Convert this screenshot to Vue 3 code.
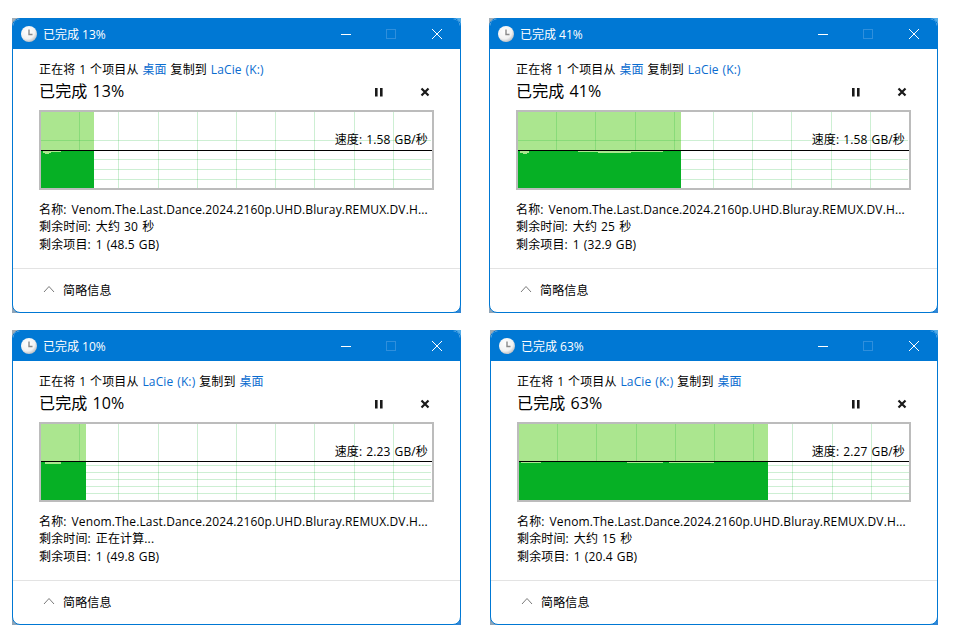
<script setup>
const verticals = [38, 77, 117, 156, 195, 234, 273, 313, 352]
const linesA = [28, 47, 57, 67]
const linesB = [41, 48, 55, 62, 69]
const windows = [
  { pct: 13, from: '桌面', to: 'LaCie (K:)', speed: '1.58', time: '大约 30 秒', left: '1 (48.5 GB)', fill: 53, line: 38, grid: linesA, notches: [[2, 8, 2], [4, 4, 3], [10, 10, 1]] },
  { pct: 41, from: '桌面', to: 'LaCie (K:)', speed: '1.58', time: '大约 25 秒', left: '1 (32.9 GB)', fill: 163, line: 38, grid: linesA, notches: [[2, 9, 2], [5, 4, 3], [60, 20, 1], [80, 33, 2], [113, 32, 1]] },
  { pct: 10, from: 'LaCie (K:)', to: '桌面', speed: '2.23', time: '正在计算...', left: '1 (49.8 GB)', fill: 45, line: 37, grid: linesB, notches: [[4, 16, 2]] },
  { pct: 63, from: 'LaCie (K:)', to: '桌面', speed: '2.27', time: '大约 15 秒', left: '1 (20.4 GB)', fill: 249, line: 37, grid: linesB, shift: true, notches: [[2, 20, 1], [108, 36, 1], [150, 45, 1]] }
]
</script>

<template>
  <main class="desk">
    <section v-for="w in windows" :key="w.pct" class="win" :class="{ shifted: w.shift }">
      <div class="shell">
        <header class="title">
          <svg class="clock" width="18" height="18" viewBox="0 0 18 18">
            <defs>
              <radialGradient :id="'c' + w.pct" cx="40%" cy="35%" r="70%">
                <stop offset="0" stop-color="#ffffff" />
                <stop offset="0.65" stop-color="#f2f2f2" />
                <stop offset="1" stop-color="#b4b8bd" />
              </radialGradient>
            </defs>
            <circle cx="9" cy="9" r="8" :fill="'url(#c' + w.pct + ')'" />
            <path d="M9 4.5V9.5H12.5" fill="none" stroke="#8a8a8a" stroke-width="1.4" />
          </svg>
          <span class="title-text">已完成 {{ w.pct }}%</span>
          <div class="controls">
            <span class="ctl">
              <svg width="12" height="12" viewBox="0 0 12 12"><path d="M1 6.5H11" stroke="#fff" stroke-width="1" /></svg>
            </span>
            <span class="ctl">
              <svg class="max" width="12" height="12" viewBox="0 0 12 12"><rect x="1.5" y="1.5" width="9" height="9" fill="none" stroke="#2f8fdc" stroke-width="1" /></svg>
            </span>
            <span class="ctl">
              <svg width="12" height="12" viewBox="0 0 12 12"><path d="M1 1L11 11M11 1L1 11" stroke="#fff" stroke-width="1" /></svg>
            </span>
          </div>
        </header>

        <div class="body">
          <p class="op">正在将 1 个项目从 <a>{{ w.from }}</a> 复制到 <a>{{ w.to }}</a></p>
          <div class="head">
            <h1>已完成 {{ w.pct }}%</h1>
            <div class="actions">
              <svg width="10" height="10" viewBox="0 0 10 10"><path d="M1 1H3.6V9.5H1ZM6 1H8.6V9.5H6Z" fill="#1a1a1a" /></svg>
              <svg width="10" height="10" viewBox="0 0 10 10"><path d="M1.5 1.5L8.5 8.5M8.5 1.5L1.5 8.5" stroke="#1a1a1a" stroke-width="2.2" /></svg>
            </div>
          </div>

          <div class="chart">
            <svg class="plot">
              <rect x="0" y="0" :width="w.fill" height="76" fill="#abe68f" />
              <rect v-for="v in verticals" :key="v" :x="v" y="0" width="1" height="76" fill="#06b025" fill-opacity="0.2" />
              <rect v-for="g in w.grid" :key="g" x="0" :y="g" width="390" height="1" fill="#06b025" fill-opacity="0.2" />
              <rect x="0" :y="w.line" :width="w.fill" height="40" fill="#06b025" />
              <rect v-for="n in w.notches" :key="n[0]" :x="n[0]" :y="w.line + 1" :width="n[1]" :height="n[2]" fill="#abe68f" />
              <rect x="0" :y="w.line" width="392" height="1" fill="#000" />
            </svg>
            <span class="speed">速度: {{ w.speed }} GB/秒</span>
          </div>

          <dl class="info">
            <div><dt>名称:</dt><dd>Venom.The.Last.Dance.2024.2160p.UHD.Bluray.REMUX.DV.H...</dd></div>
            <div><dt>剩余时间:</dt><dd>{{ w.time }}</dd></div>
            <div><dt>剩余项目:</dt><dd>{{ w.left }}</dd></div>
          </dl>
        </div>

        <footer class="foot">
          <svg width="12" height="8" viewBox="0 0 12 8"><path d="M1 7L6 1.5L11 7" fill="none" stroke="#7a7a7a" stroke-width="1" /></svg>
          <span>简略信息</span>
        </footer>
      </div>
    </section>
  </main>
</template>

<style>
html, body { background: #fff; }
</style>

<style scoped>
.desk {
  width: 955px;
  height: 643px;
  box-sizing: border-box;
  padding: 18px 0 0 12px;
  display: grid;
  grid-template-columns: 449px 449px;
  grid-template-rows: 295px 295px;
  column-gap: 28px;
  row-gap: 17px;
  background: #fff;
  font-family: "Open Sans", "Noto Sans CJK SC", sans-serif;
  font-size: 12px;
  letter-spacing: 0.13px;
  word-spacing: 0.8px;
  color: #000;
}
.win {
  background:
    linear-gradient(#a3adb5, #a3adb5) left top / 8px 8px no-repeat,
    linear-gradient(#55ade8, #55ade8) right top / 8px 8px no-repeat,
    linear-gradient(#8fa5b8, #8fa5b8) left bottom / 8px 8px no-repeat,
    linear-gradient(#2f86d6, #2f86d6) right bottom / 8px 8px no-repeat;
}
.win.shifted { margin-left: 1px; }
.shell {
  height: 100%;
  box-sizing: border-box;
  border: 1px solid #0078d4;
  border-radius: 8px;
  overflow: hidden;
  background: #fff;
  display: flex;
  flex-direction: column;
}
.title {
  height: 30px;
  flex: none;
  margin-top: -1px;
  padding-top: 1px;
  background: #0078d4;
  color: #fff;
  display: flex;
  align-items: center;
  padding-left: 7px;
  letter-spacing: 0;
  word-spacing: 0;
}
.clock { flex: none; margin-right: 5px; }
.title-text { flex: 1; }
.controls { display: flex; }
.ctl {
  width: 45.5px;
  height: 30px;
  display: flex;
  align-items: center;
  justify-content: center;
}
.max { margin-right: 1px; }
.body {
  flex: 1;
  padding: 11px 26px 0 26px;
}
.op {
  margin: 0;
  line-height: 20px;
  white-space: nowrap;
  word-spacing: 0.6px;
}
.op a { color: #0a6ccf; }
.head {
  display: flex;
  justify-content: space-between;
  align-items: center;
  height: 22px;
  margin-bottom: 8px;
}
.head h1 {
  margin: 0;
  font-size: 16px;
  font-weight: 400;
  line-height: 22px;
}
.actions {
  display: flex;
  gap: 36px;
  padding-right: 4px;
  margin-top: 2px;
}
.chart {
  position: relative;
  height: 80px;
  box-sizing: border-box;
  border: 2px solid #bcbcbc;
}
.plot {
  display: block;
  width: 100%;
  height: 100%;
}
.speed {
  position: absolute;
  right: 4px;
  top: 19px;
  line-height: 18px;
  white-space: nowrap;
}
.info {
  margin: 10.5px 0 0;
  line-height: 17.5px;
}
.info div { display: flex; gap: 5px; white-space: nowrap; }
.info dt, .info dd { margin: 0; }
.foot {
  flex: none;
  height: 42px;
  padding-bottom: 1px;
  border-top: 1px solid #e3e3e3;
  display: flex;
  align-items: center;
  gap: 8px;
  padding-left: 30px;
}
.foot svg { margin-top: -2px; }
</style>
